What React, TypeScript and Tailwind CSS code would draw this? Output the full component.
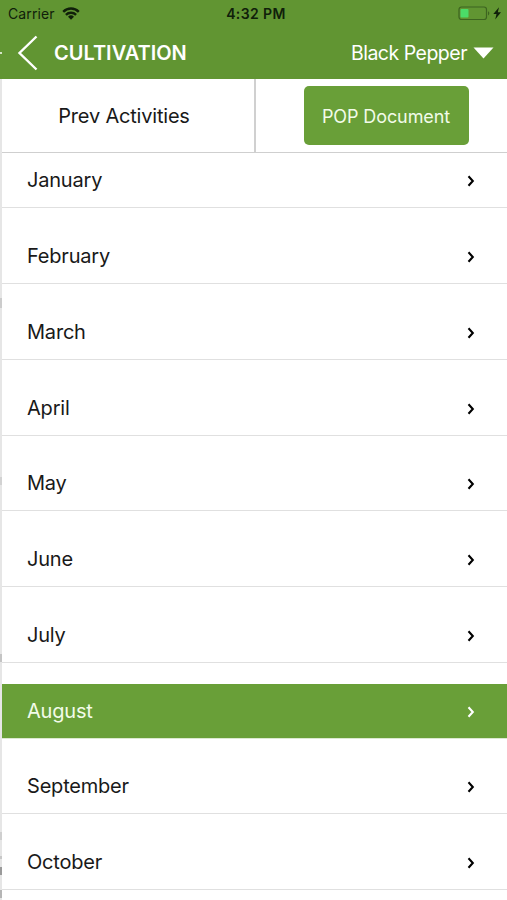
import clsx from "clsx";

const months = ["January", "February", "March", "April", "May", "June", "July", "August", "September", "October"];
const current = "August";

function StatusBar() {
  return (
    <div className="relative flex h-[27px] items-center justify-between pr-[5px] pl-[8px] text-[#10200a]">
      <div className="flex items-center gap-[7px]">
        <span className="text-[14px] tracking-[0.1px]">Carrier</span>
        <svg width="18" height="13" viewBox="0 0 18 13" fill="none" stroke="currentColor" strokeWidth="2.4">
          <path d="M1.2 4.8a11 11 0 0 1 15.6 0" />
          <path d="M3.9 7.9a7.2 7.2 0 0 1 10.2 0" />
          <path d="M9 12.8 6 9.8a4.3 4.3 0 0 1 6 0Z" fill="currentColor" stroke="none" />
        </svg>
      </div>
      <span className="absolute inset-x-0 pl-[5px] text-center text-[14px] font-semibold tracking-[0.4px]">4:32 PM</span>
      <svg width="44" height="15" viewBox="0 0 44 15">
        <rect x="1" y="1" width="27.5" height="12.5" rx="2.5" fill="none" stroke="#3d6420" strokeWidth="1.2" />
        <rect x="2.5" y="3" width="8" height="8.5" rx="1" fill="#4bdc68" />
        <path d="M30 5.2c1.8.7 1.8 3.5 0 4.2Z" fill="#3d6420" />
        <path d="M41 1.2 35.3 8h3.2l-1.3 5.6L43 6.3h-3.2Z" fill="currentColor" />
      </svg>
    </div>
  );
}

function Header() {
  return (
    <header className="h-[79px] bg-[#619532]">
      <StatusBar />
      <div className="flex h-[52px] items-center pr-[13px] text-white">
        <span className="h-[1.5px] w-[2px] bg-[#d5e4c6]" />
        <svg className="ml-[15px]" width="22" height="38" viewBox="0 0 22 38" fill="none" stroke="currentColor" strokeWidth="2.4">
          <path d="M19.5 2.5 2.5 19l17 16.5" />
        </svg>
        <h1 className="ml-[15px] text-[20px] font-semibold">CULTIVATION</h1>
        <div className="ml-auto flex items-center gap-[6px]">
          <span className="pt-[1px] text-[19.5px] tracking-[-0.5px]">Black Pepper</span>
          <svg width="21" height="12" viewBox="0 0 21 12">
            <path d="M.5.5h20L10.5 11.5Z" fill="currentColor" />
          </svg>
        </div>
      </div>
    </header>
  );
}

function Month({ name, active }: { name: string; active: boolean }) {
  return (
    <li
      className={clsx(
        "flex h-[55px] shrink-0 items-center justify-between border-b pr-[32px] pl-[25px]",
        active ? "border-[#dce9d0] bg-[#699f38] text-[#f2fbe9]" : "border-[#e0e0e0] text-[#191919]",
      )}
    >
      <span className="text-[20px] tracking-[-0.2px]">{name}</span>
      <svg
        className={clsx("mt-[2px]", active ? "text-white" : "text-black")}
        width="8"
        height="12"
        viewBox="0 0 8 12"
        fill="none"
        stroke="currentColor"
        strokeWidth="2.1"
      >
        <path d="M1.5 1.3 5.8 6 1.5 10.7" />
      </svg>
    </li>
  );
}

// Edge of the screen underneath, peeking out on the left
function Edge() {
  return (
    <div className="flex w-[2px] shrink-0 flex-col bg-[#e6e6e6]">
      <span className="mt-[219px] h-[10px] bg-[#cccccc]" />
      <span className="mt-[169px] h-[8px] bg-[#d2d2d2]" />
      <span className="mt-[169px] h-[8px] bg-[#c4c4c4]" />
      <span className="mt-[170px] h-[8px] bg-[#cfcfcf]" />
      <span className="mt-[16px] h-[3px] bg-[#c8c8c8]" />
      <span className="mt-[8px] h-[8px] bg-[#9a9a9a]" />
      <span className="mt-[15px] h-[8px] bg-[#b5b5b5]" />
    </div>
  );
}

export default function App() {
  return (
    <div className="h-[900px] w-[507px] overflow-hidden bg-white font-['Inter',sans-serif]">
      <Header />
      <div className="flex h-[821px]">
        <Edge />
        <main className="flex-1">
          <div className="flex h-[74px] border-b border-[#cfcfcf]">
            <div className="flex w-[254px] items-center justify-center border-r-2 border-[#d0d0d0] pt-[1px] pr-[8px] text-[20px] tracking-[-0.2px] text-[#191919]">
              Prev Activities
            </div>
            <div className="flex flex-1 items-center justify-center pl-[9px]">
              <button className="h-[59px] w-[165px] rounded-[5px] bg-[#699f38] pt-[1px] text-[18px] tracking-[-0.1px] text-[#f2fbe9]">
                POP Document
              </button>
            </div>
          </div>
          <ul className="flex flex-col gap-[20.75px] pt-[0.25px]">
            {months.map((m) => (
              <Month key={m} name={m} active={m === current} />
            ))}
          </ul>
        </main>
      </div>
    </div>
  );
}
